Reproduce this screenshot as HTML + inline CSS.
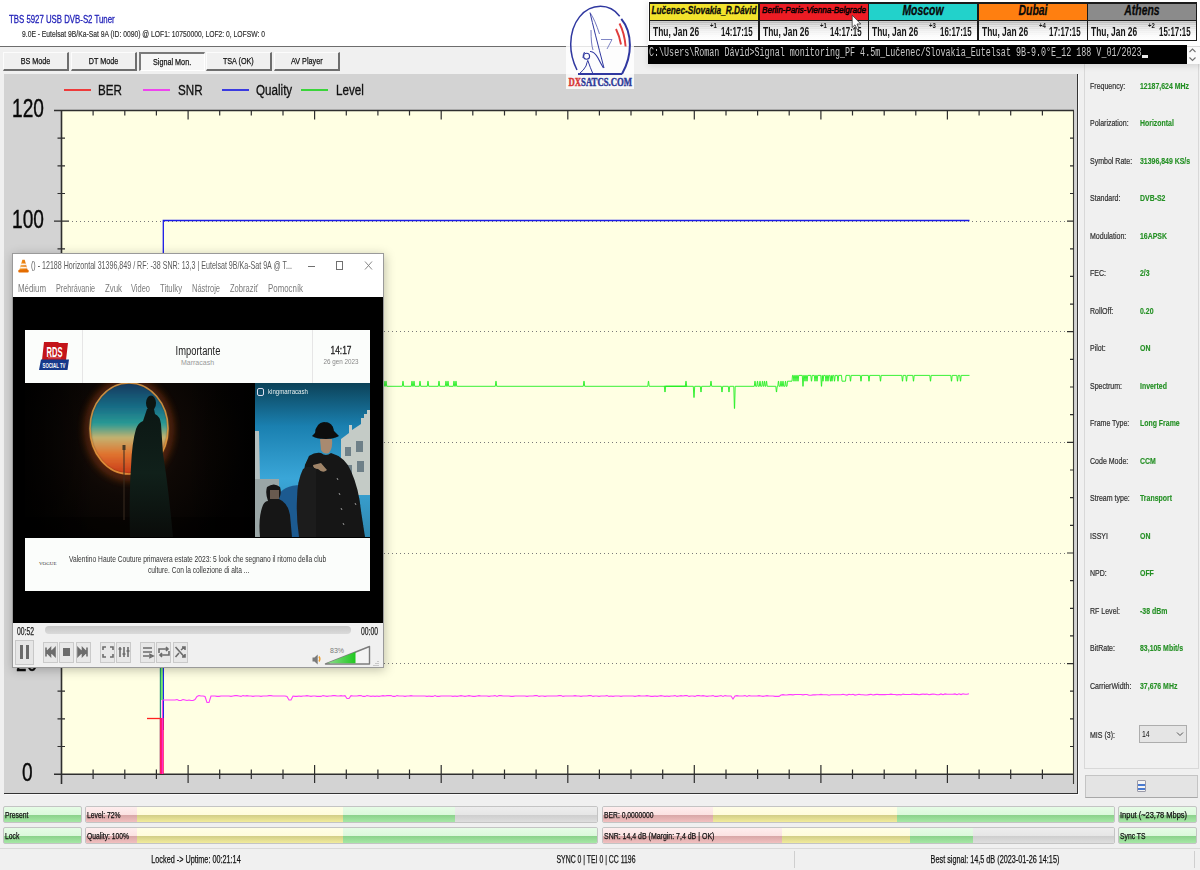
<!DOCTYPE html>
<html><head><meta charset="utf-8">
<style>
*{margin:0;padding:0;box-sizing:border-box}
html,body{width:1200px;height:870px;overflow:hidden;background:#f0f0f0;font-family:"Liberation Sans",sans-serif}
.a{position:absolute}
.t{position:absolute;white-space:nowrap;transform-origin:0 0}
#hdr{left:0;top:0;width:1200px;height:47px;background:#fff;border-bottom:1px solid #6d6d6d}
.tab{position:absolute;top:52px;height:19px;width:66px;background:#f0f0f0;border-top:1px solid #fcfcfc;border-left:1px solid #fcfcfc;border-right:2px solid #6e6e6e;border-bottom:2px solid #6e6e6e;font-size:9.5px;color:#111;text-align:center;line-height:16px}
.tab.sel{border-top:2px solid #7a7a7a;border-left:2px solid #7a7a7a;border-right:1px solid #fff;border-bottom:1px solid #fff;background:#f6f6f6;line-height:16px}
.tab span{display:inline-block;transform:scaleX(.76);-webkit-text-stroke:.25px #111}
#panel{left:4px;top:74px;width:1074px;height:720px;background:#d3d3d3;border-right:1px solid #333;border-bottom:1px solid #333;box-shadow:1px 1px 0 #fafafa}
.lg{position:absolute;top:82px;font-size:14px;color:#111;-webkit-text-stroke:.3px #111;transform:scaleX(.83);transform-origin:0 0}
.ylab{position:absolute;font-size:26px;color:#0a0a0a;-webkit-text-stroke:.4px #0a0a0a;line-height:1;transform:scaleX(.735);transform-origin:0 0}
#rp{left:1084px;top:64px;width:115px;height:705px;border-left:1px solid #d8d8d8;border-right:1px solid #d8d8d8;border-bottom:1px solid #d8d8d8}
.rl{position:absolute;left:1090px;font-size:9px;color:#303030;-webkit-text-stroke:.2px #303030;transform:scaleX(.78);transform-origin:0 0;white-space:nowrap}
.rv{position:absolute;left:1140px;font-size:9px;color:#259025;-webkit-text-stroke:.15px #259025;font-weight:bold;transform:scaleX(.77);transform-origin:0 0;white-space:nowrap}
.bar{position:absolute;height:17px;border:1px solid #c4c4c4;border-radius:2px;overflow:hidden}
.bar i{position:absolute;top:0;bottom:0;display:block}
.bar b{position:absolute;left:1px;top:0;font-weight:normal;font-size:9px;color:#111;line-height:17px;transform:scaleX(.75);-webkit-text-stroke:.25px #111;transform-origin:0 0;white-space:nowrap}
.g{background:linear-gradient(#e6fce6 0,#dcf8dc 52%,#8ad08a 52%,#a6e8a6 100%)}
.p{background:linear-gradient(#feeeee 0,#fbe2e2 52%,#d6a6a6 52%,#f2c0c0 100%)}
.y{background:linear-gradient(#fffee6 0,#fffcdc 52%,#d0cc86 52%,#f2ec9c 100%)}
.gr{background:linear-gradient(#ededed 0,#e6e6e6 52%,#cdcdcd 52%,#dedede 100%)}
.st{position:absolute;top:853px;font-size:11px;color:#111;-webkit-text-stroke:.25px #111;transform:scaleX(.66);transform-origin:50% 0;white-space:nowrap;text-align:center}
</style></head><body>
<div id="hdr" class="a"></div>
<div class="t" style="left:9px;top:13px;font-size:11.5px;color:#2020b8;-webkit-text-stroke:.3px #2020b8;transform:scaleX(.68)">TBS 5927 USB DVB-S2 Tuner</div>
<div class="t" style="left:22px;top:28px;font-size:9.5px;color:#333;-webkit-text-stroke:.2px #333;transform:scaleX(.71)">9.0E - Eutelsat 9B/Ka-Sat 9A (ID: 0090) @ LOF1: 10750000, LOF2: 0, LOFSW: 0</div>

<div class="tab" style="left:3px"><span>BS Mode</span></div>
<div class="tab" style="left:71px"><span>DT Mode</span></div>
<div class="tab sel" style="left:139px"><span>Signal Mon.</span></div>
<div class="tab" style="left:206px"><span>TSA (OK)</span></div>
<div class="tab" style="left:274px"><span>AV Player</span></div>

<div id="panel" class="a"></div>
<svg width="1200" height="870" style="position:absolute;left:0;top:0">
<rect x="61.5" y="110.5" width="1012.5" height="663.7" fill="#ffffe3"/>
<line x1="72" y1="663.5" x2="1068" y2="663.5" stroke="#7a7a7a" stroke-width="1" stroke-dasharray="1 3"/>
<line x1="72" y1="553.5" x2="1068" y2="553.5" stroke="#7a7a7a" stroke-width="1" stroke-dasharray="1 3"/>
<line x1="72" y1="442.5" x2="1068" y2="442.5" stroke="#7a7a7a" stroke-width="1" stroke-dasharray="1 3"/>
<line x1="72" y1="331.5" x2="1068" y2="331.5" stroke="#7a7a7a" stroke-width="1" stroke-dasharray="1 3"/>
<line x1="72" y1="221.5" x2="1068" y2="221.5" stroke="#7a7a7a" stroke-width="1" stroke-dasharray="1 3"/>
<path d="M54,110.5 H1074 M61.5,110.5 V784 M54,774.2 H1074" stroke="#2e2e2e" stroke-width="1.6" fill="none"/><path d="M1073.5,110.5 V784" stroke="#3a3a36" stroke-width="1.1" fill="none"/>
<path d="M57.5,746.5 H65 M1070,746.5 H1074" stroke="#2e2e2e" stroke-width="1.2"/>
<path d="M57.5,718.9 H65 M1070,718.9 H1074" stroke="#2e2e2e" stroke-width="1.2"/>
<path d="M57.5,691.2 H65 M1070,691.2 H1074" stroke="#2e2e2e" stroke-width="1.2"/>
<path d="M54,663.6 H69 M1067,663.6 H1074" stroke="#2e2e2e" stroke-width="1.2"/>
<path d="M57.5,635.9 H65 M1070,635.9 H1074" stroke="#2e2e2e" stroke-width="1.2"/>
<path d="M57.5,608.3 H65 M1070,608.3 H1074" stroke="#2e2e2e" stroke-width="1.2"/>
<path d="M57.5,580.6 H65 M1070,580.6 H1074" stroke="#2e2e2e" stroke-width="1.2"/>
<path d="M54,553.0 H69 M1067,553.0 H1074" stroke="#2e2e2e" stroke-width="1.2"/>
<path d="M57.5,525.3 H65 M1070,525.3 H1074" stroke="#2e2e2e" stroke-width="1.2"/>
<path d="M57.5,497.7 H65 M1070,497.7 H1074" stroke="#2e2e2e" stroke-width="1.2"/>
<path d="M57.5,470.0 H65 M1070,470.0 H1074" stroke="#2e2e2e" stroke-width="1.2"/>
<path d="M54,442.4 H69 M1067,442.4 H1074" stroke="#2e2e2e" stroke-width="1.2"/>
<path d="M57.5,414.7 H65 M1070,414.7 H1074" stroke="#2e2e2e" stroke-width="1.2"/>
<path d="M57.5,387.0 H65 M1070,387.0 H1074" stroke="#2e2e2e" stroke-width="1.2"/>
<path d="M57.5,359.4 H65 M1070,359.4 H1074" stroke="#2e2e2e" stroke-width="1.2"/>
<path d="M54,331.7 H69 M1067,331.7 H1074" stroke="#2e2e2e" stroke-width="1.2"/>
<path d="M57.5,304.1 H65 M1070,304.1 H1074" stroke="#2e2e2e" stroke-width="1.2"/>
<path d="M57.5,276.4 H65 M1070,276.4 H1074" stroke="#2e2e2e" stroke-width="1.2"/>
<path d="M57.5,248.8 H65 M1070,248.8 H1074" stroke="#2e2e2e" stroke-width="1.2"/>
<path d="M54,221.1 H69 M1067,221.1 H1074" stroke="#2e2e2e" stroke-width="1.2"/>
<path d="M57.5,193.5 H65 M1070,193.5 H1074" stroke="#2e2e2e" stroke-width="1.2"/>
<path d="M57.5,165.8 H65 M1070,165.8 H1074" stroke="#2e2e2e" stroke-width="1.2"/>
<path d="M57.5,138.2 H65 M1070,138.2 H1074" stroke="#2e2e2e" stroke-width="1.2"/>
<path d="M93.1,110.5 V115.5 M93.1,769.5 V779" stroke="#2e2e2e" stroke-width="1.2"/>
<path d="M124.8,110.5 V115.5 M124.8,769.5 V779" stroke="#2e2e2e" stroke-width="1.2"/>
<path d="M156.4,110.5 V115.5 M156.4,769.5 V779" stroke="#2e2e2e" stroke-width="1.2"/>
<path d="M188.1,110.5 V119.5 M188.1,765 V783" stroke="#2e2e2e" stroke-width="1.2"/>
<path d="M219.7,110.5 V115.5 M219.7,769.5 V779" stroke="#2e2e2e" stroke-width="1.2"/>
<path d="M251.3,110.5 V115.5 M251.3,769.5 V779" stroke="#2e2e2e" stroke-width="1.2"/>
<path d="M283.0,110.5 V115.5 M283.0,769.5 V779" stroke="#2e2e2e" stroke-width="1.2"/>
<path d="M314.6,110.5 V119.5 M314.6,765 V783" stroke="#2e2e2e" stroke-width="1.2"/>
<path d="M346.3,110.5 V115.5 M346.3,769.5 V779" stroke="#2e2e2e" stroke-width="1.2"/>
<path d="M377.9,110.5 V115.5 M377.9,769.5 V779" stroke="#2e2e2e" stroke-width="1.2"/>
<path d="M409.5,110.5 V115.5 M409.5,769.5 V779" stroke="#2e2e2e" stroke-width="1.2"/>
<path d="M441.2,110.5 V119.5 M441.2,765 V783" stroke="#2e2e2e" stroke-width="1.2"/>
<path d="M472.8,110.5 V115.5 M472.8,769.5 V779" stroke="#2e2e2e" stroke-width="1.2"/>
<path d="M504.5,110.5 V115.5 M504.5,769.5 V779" stroke="#2e2e2e" stroke-width="1.2"/>
<path d="M536.1,110.5 V115.5 M536.1,769.5 V779" stroke="#2e2e2e" stroke-width="1.2"/>
<path d="M567.8,110.5 V119.5 M567.8,765 V783" stroke="#2e2e2e" stroke-width="1.2"/>
<path d="M599.4,110.5 V115.5 M599.4,769.5 V779" stroke="#2e2e2e" stroke-width="1.2"/>
<path d="M631.0,110.5 V115.5 M631.0,769.5 V779" stroke="#2e2e2e" stroke-width="1.2"/>
<path d="M662.7,110.5 V115.5 M662.7,769.5 V779" stroke="#2e2e2e" stroke-width="1.2"/>
<path d="M694.3,110.5 V119.5 M694.3,765 V783" stroke="#2e2e2e" stroke-width="1.2"/>
<path d="M726.0,110.5 V115.5 M726.0,769.5 V779" stroke="#2e2e2e" stroke-width="1.2"/>
<path d="M757.6,110.5 V115.5 M757.6,769.5 V779" stroke="#2e2e2e" stroke-width="1.2"/>
<path d="M789.2,110.5 V115.5 M789.2,769.5 V779" stroke="#2e2e2e" stroke-width="1.2"/>
<path d="M820.9,110.5 V119.5 M820.9,765 V783" stroke="#2e2e2e" stroke-width="1.2"/>
<path d="M852.5,110.5 V115.5 M852.5,769.5 V779" stroke="#2e2e2e" stroke-width="1.2"/>
<path d="M884.2,110.5 V115.5 M884.2,769.5 V779" stroke="#2e2e2e" stroke-width="1.2"/>
<path d="M915.8,110.5 V115.5 M915.8,769.5 V779" stroke="#2e2e2e" stroke-width="1.2"/>
<path d="M947.4,110.5 V119.5 M947.4,765 V783" stroke="#2e2e2e" stroke-width="1.2"/>
<path d="M979.1,110.5 V115.5 M979.1,769.5 V779" stroke="#2e2e2e" stroke-width="1.2"/>
<path d="M1010.7,110.5 V115.5 M1010.7,769.5 V779" stroke="#2e2e2e" stroke-width="1.2"/>
<path d="M1042.4,110.5 V115.5 M1042.4,769.5 V779" stroke="#2e2e2e" stroke-width="1.2"/>
<path d="M163.3,730 V220.5 H969.5" stroke="#1a1ae8" stroke-width="1.3" fill="none"/>
<path d="M160.4,774 V386" stroke="#1f8f78" stroke-width="1.2" fill="none"/>
<path d="M161.9,700 V386" stroke="#22e022" stroke-width="1.1" fill="none"/>
<path d="M164,386.3 H383.3 L383.9,381.2 L384.1,381.2 L384.7,386.3 H385.3 L385.9,381.2 L386.1,381.2 L386.7,386.3 H402.3 L402.9,381.2 L403.1,381.2 L403.7,386.3 H411.3 L411.9,381.2 L412.1,381.2 L412.7,386.3 H413.3 L413.9,381.2 L414.1,381.2 L414.7,386.3 H419.3 L419.9,381.2 L420.1,381.2 L420.7,386.3 H427.3 L427.9,381.2 L428.1,381.2 L428.7,386.3 H438.3 L438.9,381.2 L439.1,381.2 L439.7,386.3 H445.3 L445.9,381.2 L446.1,381.2 L446.7,386.3 H447.3 L447.9,381.2 L448.1,381.2 L448.7,386.3 H453.3 L453.9,381.2 L454.1,381.2 L454.7,386.3 H455.3 L455.9,381.2 L456.1,381.2 L456.7,386.3 H495.3 L495.9,381.2 L496.1,381.2 L496.7,386.3 H583.3 L583.9,381.2 L584.1,381.2 L584.7,386.3 H647.8 L648.4,381.2 L648.6,381.2 L649.2,386.3 H685.3 L685.9,381.2 L686.1,381.2 L686.7,386.3 H664.3 L664.9,392 L665.1,392 L665.7,386.3 H693.3 L693.9,397.5 L694.1,397.5 L694.7,386.3 H700.3 L700.9,392 L701.1,392 L701.7,386.3 H710.3 L710.9,381.2 L711.1,381.2 L711.7,386.3 H721.3 L721.9,392 L722.1,392 L722.7,386.3 H728.3 L728.9,392 L729.1,392 L729.7,386.3 H733.8 L734.4,408.5 L734.6,408.5 L735.2,386.3 H754.3 L754.9,381.2 L755.1,381.2 L755.7,386.3 H756.8 L757.4,381.2 L757.6,381.2 L758.2,386.3 H759.3 L759.9,381.2 L760.1,381.2 L760.7,386.3 H761.8 L762.4,381.2 L762.6,381.2 L763.2,386.3 H763.8 L764.4,381.2 L764.6,381.2 L765.2,386.3 H765.8 L766.4,381.2 L766.6,381.2 L767.2,386.3 H775.8 L776.4,392 L776.6,392 L777.2,386.3 H777.8 L778.4,381.2 L778.6,381.2 L779.2,386.3 H780.3 L780.9,381.2 L781.1,381.2 L781.7,386.3 H782.3 L782.9,381.2 L783.1,381.2 L783.7,386.3 H784.8 L785.4,381.2 L785.6,381.2 L786.2,386.3 H787 L787.5,381.2 H792 L792.5,375.4 H793.3 L793.9,381.2 L794.1,381.2 L794.7,375.4 H795.3 L795.9,381.2 L796.1,381.2 L796.7,375.4 H797.3 L797.9,381.2 L798.1,381.2 L798.7,375.4 H802.3 L802.9,386.3 L803.1,386.3 L803.7,375.4 H804.3 L804.9,381.2 L805.1,381.2 L805.7,375.4 H806.3 L806.9,381.2 L807.1,381.2 L807.7,375.4 H810.8 L811.4,381.2 L811.6,381.2 L812.2,375.4 H814.3 L814.9,381.2 L815.1,381.2 L815.7,375.4 H816.3 L816.9,381.2 L817.1,381.2 L817.7,375.4 H820.8 L821.4,386.3 L821.6,386.3 L822.2,375.4 H822.3 L822.9,381.2 L823.1,381.2 L823.7,375.4 H825.3 L825.9,381.2 L826.1,381.2 L826.7,375.4 H827.3 L827.9,381.2 L828.1,381.2 L828.7,375.4 H829.8 L830.4,381.2 L830.6,381.2 L831.2,375.4 H831.3 L831.9,381.2 L832.1,381.2 L832.7,375.4 H833.8 L834.4,381.2 L834.6,381.2 L835.2,375.4 H837.3 L837.9,381.2 L838.1,381.2 L838.7,375.4 H841.5 L842,381.2 H845.5 L846,375.4 H849.8 L850.4,381.2 L850.6,381.2 L851.2,375.4 H860.3 L860.9,381.2 L861.1,381.2 L861.7,375.4 H868.3 L868.9,381.2 L869.1,381.2 L869.7,375.4 H879.8 L880.4,381.2 L880.6,381.2 L881.2,375.4 H901.8 L902.4,381.2 L902.6,381.2 L903.2,375.4 H905.8 L906.4,381.2 L906.6,381.2 L907.2,375.4 H912.8 L913.4,381.2 L913.6,381.2 L914.2,375.4 H929.8 L930.4,381.2 L930.6,381.2 L931.2,375.4 H950.8 L951.4,381.2 L951.6,381.2 L952.2,375.4 H956.8 L957.4,381.2 L957.6,381.2 L958.2,375.4 H959.8 L960.4,381.2 L960.6,381.2 L961.2,375.4 H969.5" stroke="#22ee22" stroke-width="0.9" fill="none"/>
<path d="M163,700 H175 L177,699.5 L179,700.5 L181,700.5 L183,699.5 L185,700.0 L187,700.5 L189,700.0 L191,700.5 L193,700.5 L195,699.5 L197,696.5 L199,695.5 L201,696.0 L203,696.0 L205,696.5 L207,702.5 L209,702.5 L211,696.0 L213,696.0 L215,696.0 L217,696.4 L219,696.4 L221,696.0 L223,696.0 L225,696.0 L227,696.0 L229,696.0 L231,696.4 L233,696.0 L235,695.6 L237,695.6 L239,696.0 L241,696.4 L243,695.6 L245,696.0 L247,695.6 L249,696.0 L251,696.0 L253,696.4 L255,696.0 L257,696.0 L259,696.0 L261,696.4 L263,696.0 L265,696.0 L267,696.0 L269,695.6 L271,695.6 L273,696.0 L275,696.0 L277,696.0 L279,696.0 L281,696.0 L283,696.0 L285,696.0 L287,696.4 L289,700.0 L291,700.0 L293,696.0 L295,696.4 L297,696.4 L299,696.0 L301,696.4 L303,696.0 L305,696.0 L307,695.6 L309,696.0 L311,696.4 L313,696.0 L315,696.0 L317,696.4 L319,696.4 L321,696.4 L323,695.6 L325,696.0 L327,696.4 L329,696.0 L331,696.0 L333,695.6 L335,695.6 L337,696.0 L339,696.0 L341,695.6 L343,696.0 L345,695.6 L347,698.5 L349,698.5 L351,695.6 L353,696.0 L355,696.0 L357,696.0 L359,695.6 L361,695.6 L363,696.4 L365,696.4 L367,695.6 L369,696.0 L371,696.4 L373,696.0 L375,696.4 L377,696.0 L379,696.4 L381,696.0 L383,695.6 L385,696.0 L387,695.6 L389,695.6 L391,695.6 L393,696.4 L395,696.4 L397,695.6 L399,696.0 L401,696.0 L403,696.0 L405,696.4 L407,696.0 L409,696.0 L411,695.6 L413,696.0 L415,696.0 L417,696.0 L419,696.0 L421,696.0 L423,696.0 L425,696.0 L427,696.4 L429,696.0 L431,696.4 L433,696.4 L435,695.6 L437,696.4 L439,696.4 L441,696.0 L443,696.0 L445,696.0 L447,696.0 L449,696.0 L451,696.0 L453,696.4 L455,696.0 L457,696.4 L459,696.0 L461,695.6 L463,696.0 L465,696.4 L467,696.0 L469,695.6 L471,696.0 L473,696.4 L475,696.4 L477,696.0 L479,695.6 L481,696.0 L483,696.0 L485,696.0 L487,696.0 L489,696.4 L491,696.0 L493,696.0 L495,695.6 L497,696.4 L499,695.6 L501,695.6 L503,696.0 L505,696.0 L507,696.0 L509,696.0 L511,696.4 L513,696.4 L515,696.0 L517,696.0 L519,696.0 L521,696.0 L523,696.0 L525,696.0 L527,696.4 L529,696.0 L531,696.0 L533,696.0 L535,695.6 L537,695.6 L539,696.4 L541,696.0 L543,696.0 L545,696.4 L547,696.0 L549,696.0 L551,696.0 L553,696.0 L555,696.0 L557,696.0 L559,695.6 L561,695.6 L563,696.4 L565,696.0 L567,696.0 L569,696.0 L571,696.0 L573,696.0 L575,695.6 L577,696.0 L579,696.0 L581,696.4 L583,696.0 L585,696.0 L587,696.0 L589,695.6 L591,695.6 L593,696.4 L595,696.0 L597,696.0 L599,696.4 L601,696.0 L603,696.0 L605,696.0 L607,695.6 L609,696.4 L611,696.0 L613,696.4 L615,696.0 L617,696.0 L619,696.0 L621,696.4 L623,696.0 L625,696.0 L627,696.0 L629,696.0 L631,696.0 L633,696.0 L635,696.4 L637,696.0 L639,695.6 L641,696.0 L643,696.0 L645,696.0 L647,695.6 L649,696.0 L651,696.4 L653,696.4 L655,696.0 L657,696.4 L659,696.0 L661,695.6 L663,696.0 L665,696.4 L667,696.0 L669,696.4 L671,696.0 L673,696.0 L675,695.6 L677,696.4 L679,696.0 L681,695.6 L683,696.0 L685,695.6 L687,695.6 L689,696.4 L691,696.0 L693,696.0 L695,696.4 L697,695.6 L699,695.6 L701,696.0 L703,695.6 L705,696.0 L707,696.4 L709,696.0 L711,696.0 L713,695.6 L715,696.4 L717,696.4 L719,696.0 L721,695.6 L723,696.4 L725,695.6 L727,696.0 L729,696.0 L731,696.0 L733,699.0 L735,696.0 L737,695.6 L739,696.0 L741,696.0 L743,696.0 L745,695.6 L747,696.4 L749,695.6 L751,696.0 L753,696.0 L755,696.0 L757,696.0 L759,695.6 L761,696.0 L763,696.4 L765,696.0 L767,695.6 L769,696.0 L771,696.0 L773,696.0 L775,696.4 L777,696.4 L779,696.4 L781,695.0 L783,694.6 L785,695.0 L787,695.0 L789,694.6 L791,694.6 L793,694.9 L795,694.5 L797,694.5 L799,694.5 L801,694.5 L803,694.9 L805,694.5 L807,694.5 L809,695.3 L811,695.3 L813,694.9 L815,694.9 L817,694.8 L819,694.8 L821,694.4 L823,694.8 L825,694.8 L827,694.8 L829,695.2 L831,694.8 L833,694.8 L835,694.8 L837,694.8 L839,694.8 L841,694.7 L843,694.3 L845,694.7 L847,695.1 L849,694.3 L851,694.7 L853,694.3 L855,695.1 L857,694.7 L859,694.3 L861,694.7 L863,694.7 L865,695.0 L867,695.0 L869,694.6 L871,694.2 L873,695.0 L875,694.6 L877,694.2 L879,694.6 L881,694.6 L883,694.6 L885,694.6 L887,694.5 L889,694.5 L891,694.1 L893,694.5 L895,694.5 L897,694.9 L899,694.5 L901,694.9 L903,694.1 L905,694.5 L907,694.5 L909,694.5 L911,694.4 L913,694.0 L915,694.4 L917,694.4 L919,694.8 L921,694.4 L923,694.0 L925,694.4 L927,694.0 L929,694.8 L931,694.4 L933,694.0 L935,694.3 L937,694.7 L939,694.7 L941,693.9 L943,694.7 L945,693.9 L947,694.3 L949,694.3 L951,694.3 L953,694.3 L955,693.9 L957,694.7 L959,693.8 L961,694.6 L963,693.8 L965,694.2 L967,694.2 L969,693.8" stroke="#ff3cff" stroke-width="1.1" fill="none"/>
<path d="M147,718.5 H161" stroke="#ff2020" stroke-width="1.3" fill="none"/>
<rect x="159.8" y="718" width="4" height="56" fill="#ff1468"/>
<path d="M162.4,700 V774" stroke="#ff30e0" stroke-width="1.2" fill="none" opacity=".8"/>
</svg>
<div class="a" style="left:64px;top:89px;width:27px;height:2px;background:#ee3a3a"></div>
<div class="a" style="left:143px;top:89px;width:27px;height:2px;background:#ee44ee"></div>
<div class="a" style="left:222px;top:89px;width:27px;height:2px;background:#3a3ae0"></div>
<div class="a" style="left:301px;top:89px;width:27px;height:2px;background:#3ad43a"></div>
<div class="lg" style="left:98px">BER</div>
<div class="lg" style="left:178px">SNR</div>
<div class="lg" style="left:256px">Quality</div>
<div class="lg" style="left:336px">Level</div>
<div class="ylab" style="left:11.5px;top:95px">120</div>
<div class="ylab" style="left:11.5px;top:206px">100</div>
<div class="ylab" style="left:21.5px;top:759px">0</div>
<div class="ylab" style="left:16px;top:649px">20</div>
<div class="ylab" style="left:16px;top:539px">40</div>
<div class="ylab" style="left:16px;top:428px">60</div>
<div class="ylab" style="left:16px;top:318px">80</div>

<div id="rp" class="a"></div>
<div class="rl" style="top:81px">Frequency:</div><div class="rv" style="top:81px">12187,624 MHz</div>
<div class="rl" style="top:118px">Polarization:</div><div class="rv" style="top:118px">Horizontal</div>
<div class="rl" style="top:156px">Symbol Rate:</div><div class="rv" style="top:156px">31396,849 KS/s</div>
<div class="rl" style="top:193px">Standard:</div><div class="rv" style="top:193px">DVB-S2</div>
<div class="rl" style="top:231px">Modulation:</div><div class="rv" style="top:231px">16APSK</div>
<div class="rl" style="top:268px">FEC:</div><div class="rv" style="top:268px">2/3</div>
<div class="rl" style="top:306px">RollOff:</div><div class="rv" style="top:306px">0.20</div>
<div class="rl" style="top:343px">Pilot:</div><div class="rv" style="top:343px">ON</div>
<div class="rl" style="top:381px">Spectrum:</div><div class="rv" style="top:381px">Inverted</div>
<div class="rl" style="top:418px">Frame Type:</div><div class="rv" style="top:418px">Long Frame</div>
<div class="rl" style="top:456px">Code Mode:</div><div class="rv" style="top:456px">CCM</div>
<div class="rl" style="top:493px">Stream type:</div><div class="rv" style="top:493px">Transport</div>
<div class="rl" style="top:531px">ISSYI</div><div class="rv" style="top:531px">ON</div>
<div class="rl" style="top:568px">NPD:</div><div class="rv" style="top:568px">OFF</div>
<div class="rl" style="top:606px">RF Level:</div><div class="rv" style="top:606px">-38 dBm</div>
<div class="rl" style="top:643px">BitRate:</div><div class="rv" style="top:643px">83,105 Mbit/s</div>
<div class="rl" style="top:681px">CarrierWidth:</div><div class="rv" style="top:681px">37,676 MHz</div>
<div class="rl" style="top:730px">MIS (3):</div>
<div class="a" style="left:1139px;top:725px;width:48px;height:18px;border:1px solid #adadad;background:#e5e5e5"></div>
<div class="rv" style="top:729px;left:1142px;color:#111;font-weight:normal;-webkit-text-stroke:0">14</div>
<svg class="a" style="left:1176px;top:731px" width="8" height="6"><path d="M1,1.5 L4,4.5 L7,1.5" stroke="#555" stroke-width="1" fill="none"/></svg>
<div class="a" style="left:1085px;top:775px;width:113px;height:23px;border:1px solid #c4c4c4;border-bottom-color:#a8a8a8;background:#e4e4e4"></div>
<div class="a" style="left:1137px;top:780px;width:9px;height:12px;border:1px solid #9a9aa8;border-radius:1px;background:linear-gradient(#f4f4f4 0 3px,#4a7ad0 3px 5px,#f4f4f4 5px 7px,#4a7ad0 7px 9px,#f4f4f4 9px)"></div>

<div class="bar g" style="left:3px;top:806px;width:79px"><b>Present</b></div>
<div class="bar g" style="left:3px;top:827px;width:79px"><b>Lock</b></div>
<div class="bar" style="left:85px;top:806px;width:513px"><i class="p" style="left:0;width:51px"></i><i class="y" style="left:51px;width:206px"></i><i class="g" style="left:257px;width:112px"></i><i class="gr" style="left:369px;right:0"></i><b>Level: 72%</b></div>
<div class="bar" style="left:85px;top:827px;width:513px"><i class="p" style="left:0;width:51px"></i><i class="y" style="left:51px;width:206px"></i><i class="g" style="left:257px;right:0"></i><b>Quality: 100%</b></div>
<div class="bar" style="left:602px;top:806px;width:513px"><i class="p" style="left:0;width:110px"></i><i class="y" style="left:110px;width:184px"></i><i class="g" style="left:294px;right:0"></i><b>BER: 0,0000000</b></div>
<div class="bar" style="left:602px;top:827px;width:513px"><i class="p" style="left:0;width:179px"></i><i class="y" style="left:179px;width:128px"></i><i class="g" style="left:307px;width:63px"></i><i class="gr" style="left:370px;right:0"></i><b style="transform:scaleX(.775)">SNR: 14,4 dB (Margin: 7,4 dB | OK)</b></div>
<div class="bar g" style="left:1118px;top:806px;width:79px"><b style="transform:scaleX(.83)">Input (~23,78 Mbps)</b></div>
<div class="bar g" style="left:1118px;top:827px;width:79px"><b>Sync TS</b></div>
<div class="a" style="left:0;top:848px;width:1200px;height:1px;background:#d9d9d9"></div>
<div class="st" style="left:96px;width:200px">Locked -&gt; Uptime: 00:21:14</div>
<div class="st" style="left:495.5px;width:200px;transform:scaleX(.625)">SYNC 0 | TEI 0 | CC 1196</div>
<div class="st" style="left:895px;width:200px">Best signal: 14,5 dB (2023-01-26 14:15)</div>
<div class="a" style="left:794px;top:851px;width:1px;height:17px;background:#cfcfcf"></div>
<div class="a" style="left:1194px;top:851px;width:1px;height:17px;background:#cfcfcf"></div>

<div class="a" style="left:566px;top:3px;width:68px;height:86px;background:rgba(255,255,255,.82)"></div>
<svg class="a" style="left:0;top:0" width="700" height="100">
<path d="M577,70 C573,62 570.6,53 570.7,44 C571,22 584,6.3 600.5,6.3 C609,6.3 615,10 619.7,16.2" stroke="#3038a0" stroke-width="1.5" fill="none"/>
<path d="M621.3,18.8 C626.5,25 629.8,34 629.9,45 C630,56 626.5,66 622,74" stroke="#3038a0" stroke-width="2" fill="none"/>
<path d="M578,74 H622" stroke="#3038a0" stroke-width="1.8" fill="none"/>
<path d="M619.5,23.5 Q624.5,33 625.6,46.5" stroke="#e03c3c" stroke-width="1.9" fill="none"/>
<path d="M616,29 Q619.5,36 621,44.5" stroke="#e03c3c" stroke-width="1.9" fill="none"/>
<path d="M590,12.5 Q594,30 604,68" stroke="#3038a0" stroke-width="1" fill="none"/>
<path d="M590.3,13 Q595,20 599.5,34" stroke="#5058b0" stroke-width="0.8" fill="none"/>
<path d="M591,30 Q591,44 593,50" stroke="#5058b0" stroke-width="0.8" fill="none"/>
<path d="M601,39.5 H612 L607,49" stroke="#6068b8" stroke-width="0.8" fill="none"/>
<circle cx="586.6" cy="56.3" r="3" stroke="#3038a0" stroke-width="1.1" fill="none"/>
<path d="M590,51.5 Q594,51 598,58 Q601,64 603.5,68" stroke="#3038a0" stroke-width="1.1" fill="none"/>
<path d="M579,74 Q584,70 586,66 Q587,62 588,60 M588,61 Q590,67 593,74 M583,58 Q583,54 584.5,52" stroke="#3038a0" stroke-width="1" fill="none"/>
<text x="568.5" y="85.8" font-family="Liberation Serif" font-weight="bold" font-size="11.5" textLength="63.5" lengthAdjust="spacingAndGlyphs" stroke-width=".45"><tspan fill="#d83838" stroke="#d83838">DX</tspan><tspan fill="#2c3898" stroke="#2c3898">SATCS.COM</tspan></text>
</svg>
<div class="a" style="left:648px;top:0;width:553px;height:64px;background:rgba(255,255,255,.75);box-shadow:0 2px 6px rgba(0,0,0,.12)"></div>
<div class="a" style="left:649px;top:2px;width:548px;height:39px;background:#1a1a1a"></div>
<div class="a" style="left:650.0px;top:3.5px;width:108.0px;height:16px;background:#f3e32c;overflow:hidden;white-space:nowrap"><span style="position:absolute;left:50%;top:-1.5px;white-space:nowrap;font-size:11px;font-weight:bold;font-style:italic;color:#0a0a0a;line-height:16px;-webkit-text-stroke:.3px #0a0a0a;transform:translateX(-50%) scaleX(0.75)">Lučenec-Slovakia_R.Dávid</span></div>
<div class="a" style="left:650.0px;top:21px;width:108.0px;height:19px;background:repeating-linear-gradient(rgba(255,255,255,.35) 0 1px,rgba(255,255,255,0) 1px 2px),linear-gradient(#b0b0b0,#d4d4d4 22%,#eeeeee 50%,#fbfbfb 80%,#fff)"></div>
<div class="t" style="left:653.0px;top:25px;font-size:12px;font-weight:bold;color:#151515;transform:scaleX(.70)">Thu, Jan 26</div>
<div class="t" style="left:710.0px;top:21px;font-size:7.5px;font-weight:bold;color:#151515;transform:scaleX(.8)">+1</div>
<div class="t" style="left:720.5px;top:25px;font-size:12px;font-weight:bold;color:#151515;transform:scaleX(.656)">14:17:15</div>
<div class="a" style="left:759.5px;top:3.5px;width:108.0px;height:16px;background:#ec1c24;overflow:hidden;white-space:nowrap"><span style="position:absolute;left:50%;top:-1.5px;white-space:nowrap;font-size:9.5px;font-weight:normal;font-style:italic;color:#000;line-height:16px;-webkit-text-stroke:.5px #000;transform:translateX(-50%) scaleX(0.845)">Berlin-Paris-Vienna-Belgrade</span></div>
<div class="a" style="left:759.5px;top:21px;width:108.0px;height:19px;background:repeating-linear-gradient(rgba(255,255,255,.35) 0 1px,rgba(255,255,255,0) 1px 2px),linear-gradient(#b0b0b0,#d4d4d4 22%,#eeeeee 50%,#fbfbfb 80%,#fff)"></div>
<div class="t" style="left:762.5px;top:25px;font-size:12px;font-weight:bold;color:#151515;transform:scaleX(.70)">Thu, Jan 26</div>
<div class="t" style="left:819.5px;top:21px;font-size:7.5px;font-weight:bold;color:#151515;transform:scaleX(.8)">+1</div>
<div class="t" style="left:830.0px;top:25px;font-size:12px;font-weight:bold;color:#151515;transform:scaleX(.656)">14:17:15</div>
<div class="a" style="left:869.0px;top:3.5px;width:108.0px;height:16px;background:#22d2cb;overflow:hidden;white-space:nowrap"><span style="position:absolute;left:50%;top:-1.5px;white-space:nowrap;font-size:14px;font-weight:bold;font-style:italic;color:#0a0a0a;line-height:16px;-webkit-text-stroke:.3px #0a0a0a;transform:translateX(-50%) scaleX(0.745)">Moscow</span></div>
<div class="a" style="left:869.0px;top:21px;width:108.0px;height:19px;background:repeating-linear-gradient(rgba(255,255,255,.35) 0 1px,rgba(255,255,255,0) 1px 2px),linear-gradient(#b0b0b0,#d4d4d4 22%,#eeeeee 50%,#fbfbfb 80%,#fff)"></div>
<div class="t" style="left:872.0px;top:25px;font-size:12px;font-weight:bold;color:#151515;transform:scaleX(.70)">Thu, Jan 26</div>
<div class="t" style="left:929.0px;top:21px;font-size:7.5px;font-weight:bold;color:#151515;transform:scaleX(.8)">+3</div>
<div class="t" style="left:939.5px;top:25px;font-size:12px;font-weight:bold;color:#151515;transform:scaleX(.656)">16:17:15</div>
<div class="a" style="left:978.5px;top:3.5px;width:108.0px;height:16px;background:#ff7f10;overflow:hidden;white-space:nowrap"><span style="position:absolute;left:50%;top:-1.5px;white-space:nowrap;font-size:14px;font-weight:bold;font-style:italic;color:#0a0a0a;line-height:16px;-webkit-text-stroke:.3px #0a0a0a;transform:translateX(-50%) scaleX(0.745)">Dubai</span></div>
<div class="a" style="left:978.5px;top:21px;width:108.0px;height:19px;background:repeating-linear-gradient(rgba(255,255,255,.35) 0 1px,rgba(255,255,255,0) 1px 2px),linear-gradient(#b0b0b0,#d4d4d4 22%,#eeeeee 50%,#fbfbfb 80%,#fff)"></div>
<div class="t" style="left:981.5px;top:25px;font-size:12px;font-weight:bold;color:#151515;transform:scaleX(.70)">Thu, Jan 26</div>
<div class="t" style="left:1038.5px;top:21px;font-size:7.5px;font-weight:bold;color:#151515;transform:scaleX(.8)">+4</div>
<div class="t" style="left:1049.0px;top:25px;font-size:12px;font-weight:bold;color:#151515;transform:scaleX(.656)">17:17:15</div>
<div class="a" style="left:1088.0px;top:3.5px;width:108.0px;height:16px;background:#8b8b8b;overflow:hidden;white-space:nowrap"><span style="position:absolute;left:50%;top:-1.5px;white-space:nowrap;font-size:14px;font-weight:bold;font-style:italic;color:#0a0a0a;line-height:16px;-webkit-text-stroke:.3px #0a0a0a;transform:translateX(-50%) scaleX(0.745)">Athens</span></div>
<div class="a" style="left:1088.0px;top:21px;width:108.0px;height:19px;background:repeating-linear-gradient(rgba(255,255,255,.35) 0 1px,rgba(255,255,255,0) 1px 2px),linear-gradient(#b0b0b0,#d4d4d4 22%,#eeeeee 50%,#fbfbfb 80%,#fff)"></div>
<div class="t" style="left:1091.0px;top:25px;font-size:12px;font-weight:bold;color:#151515;transform:scaleX(.70)">Thu, Jan 26</div>
<div class="t" style="left:1148.0px;top:21px;font-size:7.5px;font-weight:bold;color:#151515;transform:scaleX(.8)">+2</div>
<div class="t" style="left:1158.5px;top:25px;font-size:12px;font-weight:bold;color:#151515;transform:scaleX(.656)">15:17:15</div>
<div class="a" style="left:648px;top:45px;width:539px;height:19px;background:#000"></div>
<div class="t" style="left:649px;top:46px;font-family:'Liberation Mono',monospace;font-size:12px;color:#c8c8c8;transform:scaleX(.698)">C:\Users\Roman Dávid&gt;Signal monitoring_PF 4.5m_Lučenec/Slovakia_Eutelsat 9B-9.0°E_12 188 V_01/2023</div>
<div class="a" style="left:1142px;top:55px;width:6px;height:3px;background:#e8e8e8"></div>
<svg class="a" style="left:1187px;top:46px" width="12" height="18"><path d="M2.5,6 L5.5,3 L8.5,6 M2.5,11.5 L5.5,14.5 L8.5,11.5" stroke="#707070" stroke-width="1.1" fill="none"/></svg>

<div class="a" style="left:12px;top:253px;width:372px;height:415px;background:#f0f0f0;border:1px solid #9a9a9a;box-shadow:1px 2px 10px rgba(0,0,0,.25)"></div>
<div class="a" style="left:13px;top:254px;width:370px;height:43px;background:#fff"></div>
<svg class="a" style="left:17.5px;top:258.5px" width="11" height="14"><defs><linearGradient id="cone" x1="0" x2="1"><stop offset="0" stop-color="#f59a20"/><stop offset="1" stop-color="#e06a00"/></linearGradient></defs><path d="M4.3,0.8 h2.4 L9.6,11 H1.4 Z" fill="url(#cone)"/><path d="M3.3,4.6 h4.4 l.5,1.7 h-5.4 Z M2.4,7.8 h6.2 l.5,1.6 h-7.2z" fill="#fff" opacity=".9"/><rect x="0.3" y="10.8" width="10.4" height="2.6" rx="1" fill="#e46c00"/></svg>
<div class="t" style="left:31px;top:259px;font-size:11px;color:#5a5a5a;transform:scaleX(.645)">() - 12188 Horizontal 31396,849 / RF: -38 SNR: 13,3 | Eutelsat 9B/Ka-Sat 9A @ T...</div>
<div class="a" style="left:308px;top:266px;width:7px;height:1px;background:#707070"></div>
<div class="a" style="left:336px;top:261px;width:7px;height:9px;border:1px solid #707070"></div>
<svg class="a" style="left:364px;top:260px" width="10" height="11"><path d="M1,1.5 L8,9.5 M8,1.5 L1,9.5" stroke="#7a7a7a" stroke-width=".9"/></svg>
<div class="t" style="left:18px;top:282px;font-size:10.5px;color:#7a7a7a;transform:scaleX(0.749)">Médium</div>
<div class="t" style="left:56px;top:282px;font-size:10.5px;color:#7a7a7a;transform:scaleX(0.689)">Prehrávanie</div>
<div class="t" style="left:105px;top:282px;font-size:10.5px;color:#7a7a7a;transform:scaleX(0.747)">Zvuk</div>
<div class="t" style="left:131px;top:282px;font-size:10.5px;color:#7a7a7a;transform:scaleX(0.712)">Video</div>
<div class="t" style="left:160px;top:282px;font-size:10.5px;color:#7a7a7a;transform:scaleX(0.735)">Titulky</div>
<div class="t" style="left:192px;top:282px;font-size:10.5px;color:#7a7a7a;transform:scaleX(0.716)">Nástroje</div>
<div class="t" style="left:230px;top:282px;font-size:10.5px;color:#7a7a7a;transform:scaleX(0.719)">Zobraziť</div>
<div class="t" style="left:268px;top:282px;font-size:10.5px;color:#7a7a7a;transform:scaleX(0.750)">Pomocník</div>
<div class="a" style="left:13px;top:297px;width:370px;height:326px;background:#000"></div>
<div class="a" style="left:25px;top:330px;width:345px;height:53px;background:#fbfdfb"></div>
<div class="a" style="left:82px;top:330px;width:1px;height:53px;background:#e6e6e6"></div>
<div class="a" style="left:312px;top:330px;width:1px;height:53px;background:#e6e6e6"></div>
<svg class="a" style="left:38px;top:341px" width="33" height="31"><path d="M6,1 H20 L21,2 H30 L28,19 H4 Z" fill="#c4141a"/><text x="16.5" y="15.5" font-family="Liberation Sans" font-weight="bold" font-size="15" fill="#fff" text-anchor="middle" textLength="16" lengthAdjust="spacingAndGlyphs">RDS</text><path d="M10,16.8 h13" stroke="#fff" stroke-width=".6" opacity=".6"/><path d="M3,18.5 H31 L29.5,29 H1 Z" fill="#16388a"/><text x="16" y="26.8" font-family="Liberation Sans" font-weight="bold" font-size="7.5" fill="#fff" text-anchor="middle" textLength="23" lengthAdjust="spacingAndGlyphs">SOCIAL TV</text></svg>
<div class="t" style="left:147.5px;top:344px;width:100px;text-align:center;font-size:12px;color:#222;transform:scaleX(.78);transform-origin:50% 0">Importante</div>
<div class="t" style="left:147.5px;top:359px;width:100px;text-align:center;font-size:7px;color:#999">Marracash</div>
<div class="t" style="left:311px;top:344px;width:60px;text-align:center;font-size:10.5px;color:#222;-webkit-text-stroke:.3px #222;transform:scaleX(.8);transform-origin:50% 0">14:17</div>
<div class="t" style="left:311px;top:358px;width:60px;text-align:center;font-size:7px;color:#888;transform:scaleX(.9);transform-origin:50% 0">26 gen 2023</div>
<svg class="a" style="left:25px;top:383px" width="230" height="154">
<defs>
<radialGradient id="bgL" cx="104" cy="60" r="120" gradientUnits="userSpaceOnUse"><stop offset="0" stop-color="#22140c"/><stop offset=".45" stop-color="#0e0805"/><stop offset="1" stop-color="#030201"/></radialGradient>
<linearGradient id="ell" x1="0" y1="0" x2="0" y2="1"><stop offset="0" stop-color="#143a5e"/><stop offset=".28" stop-color="#1a7088"/><stop offset=".45" stop-color="#2a9a94"/><stop offset=".6" stop-color="#c4b270"/><stop offset=".78" stop-color="#e07430"/><stop offset="1" stop-color="#c83a18"/></linearGradient>
<filter id="bl4" x="-50%" y="-50%" width="200%" height="200%"><feGaussianBlur stdDeviation="4"/></filter>
<filter id="bl1" x="-50%" y="-50%" width="200%" height="200%"><feGaussianBlur stdDeviation=".8"/></filter>
<linearGradient id="vig" x1="0" x2="1"><stop offset="0" stop-color="#000" stop-opacity=".7"/><stop offset=".3" stop-color="#000" stop-opacity="0"/><stop offset=".7" stop-color="#000" stop-opacity="0"/><stop offset="1" stop-color="#000" stop-opacity=".6"/></linearGradient>
<linearGradient id="coat" x1="0" y1="0" x2="0" y2="1"><stop offset="0" stop-color="#0c1714"/><stop offset=".5" stop-color="#10201a"/><stop offset="1" stop-color="#0a0c0a"/></linearGradient>
</defs>
<rect width="230" height="154" fill="url(#bgL)"/>
<ellipse cx="104" cy="46.5" rx="41" ry="47.5" fill="none" stroke="#d85418" stroke-width="4" opacity=".75" filter="url(#bl4)"/>
<ellipse cx="104" cy="45.5" rx="39" ry="45.5" fill="url(#ell)" filter="url(#bl1)"/>
<ellipse cx="104" cy="45.5" rx="39" ry="45.5" fill="none" stroke="#f0a040" stroke-width="1.6" opacity=".8"/>
<rect width="230" height="154" fill="url(#vig)"/>
<rect y="134" width="230" height="20" fill="#000" opacity=".35"/>
<path d="M99,66 V137" stroke="#3a2c20" stroke-width="1"/><rect x="97.5" y="62" width="3" height="5" fill="#4a3a26"/>
<ellipse cx="126" cy="20" rx="5" ry="7.5" fill="#0c1512"/><path d="M122,26 h7 l1,5 q5,2 6,10 l2,30 q5,30 10,83 H105 q-1,-40 1,-70 q1,-25 5,-38 q2,-6 7,-8z" fill="url(#coat)"/>
</svg>
<svg class="a" style="left:255px;top:383px" width="115" height="154">
<defs>
<linearGradient id="sky" x1="0" y1="0" x2="0" y2="1"><stop offset="0" stop-color="#0c4258"/><stop offset=".28" stop-color="#1a80b0"/><stop offset=".62" stop-color="#3aa6d8"/><stop offset="1" stop-color="#3088b0"/></linearGradient>
<filter id="sb" x="-10%" y="-10%" width="120%" height="120%"><feGaussianBlur stdDeviation=".5"/></filter>
</defs>
<rect width="115" height="154" fill="url(#sky)"/>
<g filter="url(#sb)">
<path d="M0,48 h4 l1,50 v56 h-5z" fill="#b4c0c0"/>
<path d="M0,96 h24 v58 h-24z" fill="#9aa6a6"/>
<path d="M86,56 l8,-6 v-8 h3 v5 l9,-6 v-6 h3 v-4 h3 v-4 h3 v85 h-29z" fill="#c4cbc6"/>
<path d="M90,64 h6 v9 h-6z M101,58 h7 v11 h-7z M92,82 h5 v10 h-5z M102,78 h7 v11 h-7z" fill="#6e8088"/>
<path d="M50,82 q4,-10 10,-9 q3,6 -3,13z" fill="#3a6a3a"/>
<path d="M22,114 q6,-12 24,-12 q20,0 26,12 v40 h-50z" fill="#1e5a90"/>
<path d="M60,50 q1,-10 9,-11 q9,0 10,9 l5,5 q-5,3 -13,3 q-10,0 -14,-3z" fill="#0a0a0a"/>
<path d="M65,56 h12 q1,9 -3,14 q-5,2 -8,-3z" fill="#a88a70"/>
<path d="M54,73 q6,-4 12,-3 q5,4 10,0 q14,4 20,18 q8,18 10,40 l4,26 H48 q0,-28 2,-46 q-4,-10 0,-26z" fill="#131515"/>
<path d="M66,80 l-8,2 q0,4 5,4 q5,5 9,1z" fill="#a08468"/>
<path d="M48,86 q7,-5 13,0 v68 h-17 q-3,-20 -2,-38 q0,-18 6,-30z" fill="#1d1d1d"/>
<path d="M12,104 q7,-5 13,0 q2,6 -1,12 q9,4 11,16 l2,22 h-32 q-2,-20 3,-32 q2,-4 5,-4 q-3,-8 -1,-14z" fill="#171717"/>
<path d="M15,107 h9 v9 h-9z" fill="#8a7868" opacity=".7"/>
</g>
<path d="M82,95 l1,2 M84,110 l1,2 M86,125 l1,2 M88,140 l1,2 M100,120 l1,2" stroke="#ccc" stroke-width="1" opacity=".7"/>
</svg>
<div class="a" style="left:257px;top:388px;width:7px;height:8px;border:1px solid #dde;border-radius:2px"></div><div class="t" style="left:268px;top:387px;font-size:8px;color:#e8f0f0;transform:scaleX(.76)">kingmarracash</div>
<div class="a" style="left:25px;top:538px;width:345px;height:53px;background:#fbfdfb"></div>
<div class="t" style="left:39px;top:561px;font-family:'Liberation Serif';font-size:5px;color:#333">VOGUE</div>
<div class="t" style="left:69px;top:553px;font-size:9.5px;color:#333;transform:scaleX(.70)">Valentino Haute Couture primavera estate 2023: 5 look che segnano il ritorno della club</div>
<div class="t" style="left:148px;top:564px;font-size:9.5px;color:#333;transform:scaleX(.70)">culture. Con la collezione di alta ...</div>
<div class="t" style="left:17px;top:626px;font-size:10px;color:#222;-webkit-text-stroke:.25px #222;transform:scaleX(.68)">00:52</div>
<div class="t" style="left:361px;top:626px;font-size:10px;color:#222;-webkit-text-stroke:.25px #222;transform:scaleX(.68)">00:00</div>
<div class="a" style="left:45px;top:626px;width:306px;height:8px;border-radius:4px;background:linear-gradient(#c6c6c6,#dadada)"></div>
<div class="a" style="left:15px;top:640px;width:19px;height:25px;border:1px solid #c8c8c8;background:#e6e6e6"></div>
<div class="a" style="left:20px;top:645px;width:3px;height:14px;background:#6a6a6a"></div>
<div class="a" style="left:26px;top:645px;width:3px;height:14px;background:#6a6a6a"></div>
<div class="a" style="left:43px;top:642px;width:15px;height:21px;border:1px solid #cacaca;background:#e8e8e8"></div>
<div class="a" style="left:59px;top:642px;width:15px;height:21px;border:1px solid #cacaca;background:#e8e8e8"></div>
<div class="a" style="left:75.5px;top:642px;width:15px;height:21px;border:1px solid #cacaca;background:#e8e8e8"></div>
<div class="a" style="left:99.5px;top:642px;width:15px;height:21px;border:1px solid #cacaca;background:#e8e8e8"></div>
<div class="a" style="left:116px;top:642px;width:15px;height:21px;border:1px solid #cacaca;background:#e8e8e8"></div>
<div class="a" style="left:140px;top:642px;width:15px;height:21px;border:1px solid #cacaca;background:#e8e8e8"></div>
<div class="a" style="left:156px;top:642px;width:15px;height:21px;border:1px solid #cacaca;background:#e8e8e8"></div>
<div class="a" style="left:172.5px;top:642px;width:15px;height:21px;border:1px solid #cacaca;background:#e8e8e8"></div>
<svg class="a" style="left:0;top:640px" width="200" height="26">
<g fill="#6c6c6c" stroke="#6c6c6c">
<path d="M46,7.5 v9 M55,8 l-4,4 l4,4z M50.5,8 l-4,4 l4,4z" stroke-width="1.6"/>
<rect x="63" y="8" width="7" height="8" stroke="none"/>
<path d="M87,7.5 v9 M78,8 l4,4 l-4,4z M82.5,8 l4,4 l-4,4z" stroke-width="1.6"/>
<path d="M103,10 v-3 h3 M110,7 h3 v3 M113,14 v3 h-3 M106,17 h-3 v-3" fill="none" stroke-width="1.6"/>
<path d="M120,7 v10 M124,7 v10 M128,7 v10 M118.5,9 h3 M122.5,14 h3 M126.5,11 h3" stroke-width="1.6" fill="none"/>
<path d="M143,8 h9 M143,12 h9 M143,16 h6 M150,14.5 l3,1.5 l-3,1.5z" stroke-width="1.6" fill="none"/>
<path d="M159,13 v-4 h9 M166,7 l2,2 l-2,2 M169,11 v4 h-9 M162,17 l-2,-2 l2,-2" stroke-width="1.6" fill="none"/>
<path d="M175.5,7 l9,10 M175.5,17 l3.5,-4 M181,10 l3.5,-3 M182,7 h3 v3 M182,17 h3 v-3" stroke-width="1.6" fill="none"/>
</g></svg>
<svg class="a" style="left:310px;top:644px" width="72" height="24"><defs><linearGradient id="vg" x1="0" x2="1"><stop offset="0" stop-color="#90dc90"/><stop offset="1" stop-color="#20c820"/></linearGradient></defs>
<path d="M2.5,13.5 h2 l3.2,-3 v10 l-3.2,-3 h-2z" fill="#7a7a7a"/><path d="M9,12.5 q1.8,2.5 0,5" stroke="#f0a030" stroke-width="1.4" fill="none"/>
<path d="M15.5,20 L59.5,2.5 V20 Z" fill="#f4f4f4" stroke="#7c7c7c" stroke-width="1.4" stroke-linejoin="round"/>
<path d="M17,19.3 L45.5,7.9 V19.3 Z" fill="url(#vg)"/>
<text x="20" y="9" font-family="Liberation Sans" font-size="7" fill="#7a7a7a" transform="scale(1,1)">83%</text>
<path d="M67.5,21.5 h1 M65.5,21.5 h1 M63.5,21.5 h1 M67.5,19.5 h1 M65.5,19.5 h1 M67.5,17.5 h1" stroke="#a0a0a0" stroke-width="1"/></svg>

<svg class="a" style="left:851px;top:14px" width="12" height="18"><path d="M1.2,1.2 V13.5 L4,10.8 L6.2,15.5 L8,14.6 L6,10 H9.8 Z" fill="#fff" stroke="#333" stroke-width=".8" stroke-linejoin="round"/></svg>
</body></html>
